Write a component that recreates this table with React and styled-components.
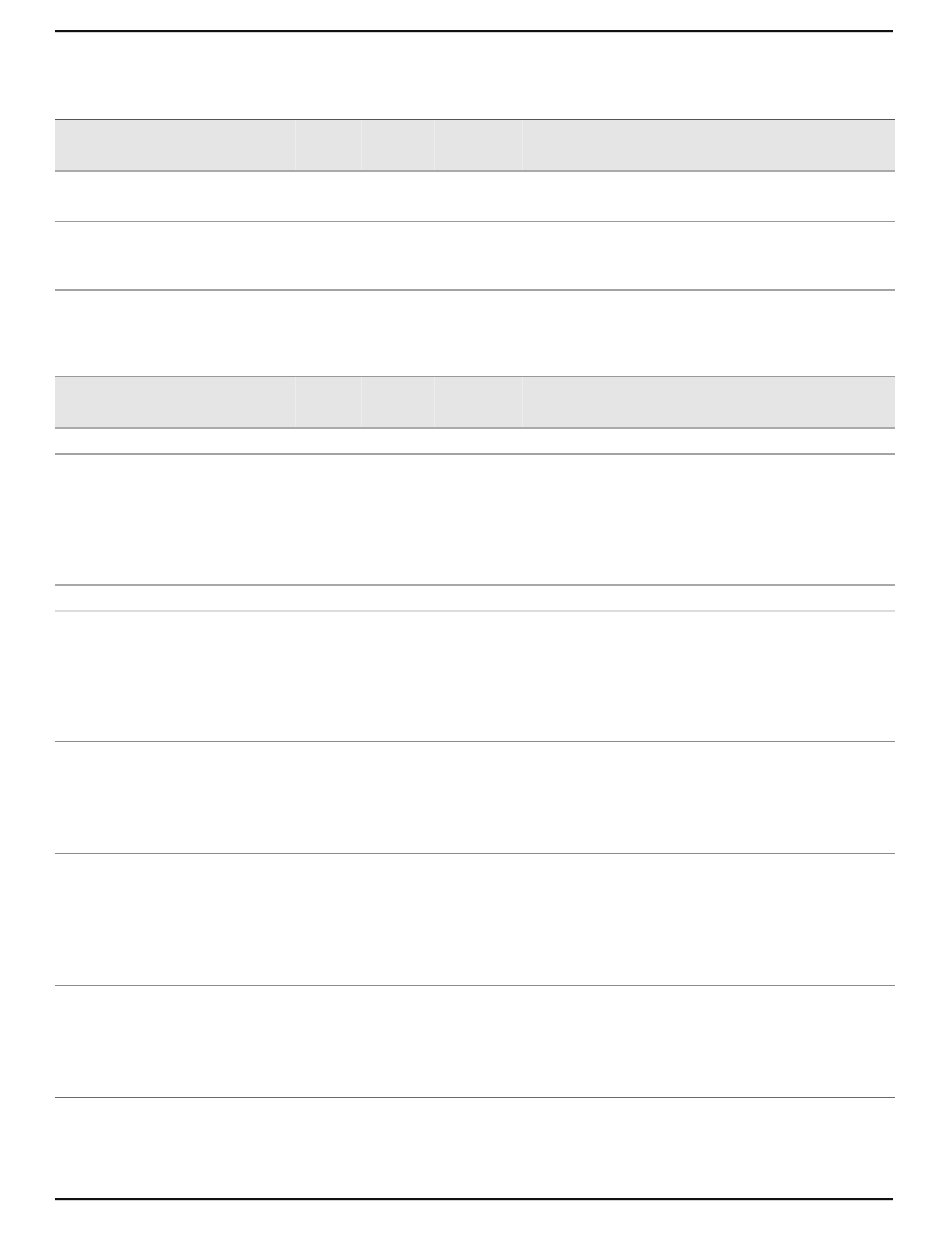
import React from 'react';
import styled, { createGlobalStyle } from 'styled-components';

const GlobalStyle = createGlobalStyle`
  html, body {
    margin: 0;
    padding: 0;
    background: #fff;
    font-family: "Liberation Sans", Arial, sans-serif;
  }
`;

const Page = styled.div`
  width: 950px;
  height: 1260px;
  padding-left: 55px;
  box-sizing: border-box;
  overflow: hidden;
`;

const Rule = styled.div`
  width: 838px;
  height: 2px;
  background: #111;
  border-bottom: 1px solid #d4d4d4;
  margin-top: ${(p) => p.$top}px;
`;

const Table = styled.div`
  width: 840px;
  margin-top: ${(p) => p.$top}px;
  display: flex;
  flex-direction: column;
`;

const HeaderRow = styled.div`
  display: grid;
  grid-template-columns: 240px 66px 73px 88px 1fr;
  height: 50px;
  background: #e5e5e5;
  border-top: 1px solid ${(p) => p.$topColor};
  border-bottom: 2px solid #aaa;
`;

const HeaderCell = styled.div`
  border-left: ${(p) => (p.$first ? 'none' : '1px solid #ededed')};
  font-size: 12px;
  font-weight: bold;
  color: #222;
`;

const Row = styled.div`
  height: ${(p) => p.$h}px;
  border-bottom: ${(p) => (p.$line ? `${p.$w}px solid ${p.$line}` : 'none')};
`;

const cols = [0, 1, 2, 3, 4];

const Header = ({ topColor }) => (
  <HeaderRow $topColor={topColor}>
    {cols.map((c) => (
      <HeaderCell key={c} $first={c === 0} />
    ))}
  </HeaderRow>
);

const firstRows = [
  { h: 49, line: '#999', w: 1 },
  { h: 67, line: '#a3a3a3', w: 2 },
];

const secondRows = [
  { h: 24, line: '#a3a3a3', w: 2 },
  { h: 129, line: '#a8a8a8', w: 2 },
  { h: 24, line: '#dcdcdc', w: 2 },
  { h: 129, line: '#8c8c8c', w: 1 },
  { h: 111, line: '#8c8c8c', w: 1 },
  { h: 131, line: '#8c8c8c', w: 1 },
  { h: 111, line: '#6a6a6a', w: 1 },
  { h: 100 },
];

const App = () => {
  return (
    <Page>
      <GlobalStyle />
      <Rule $top={30} />

      {/* first table */}
      <Table $top={86}>
        <Header topColor="#555" />
        {firstRows.map((r, i) => (
          <Row key={i} $h={r.h} $line={r.line} $w={r.w} />
        ))}
      </Table>

      {/* second table */}
      <Table $top={85}>
        <Header topColor="#999" />
        {secondRows.map((r, i) => (
          <Row key={i} $h={r.h} $line={r.line} $w={r.w} />
        ))}
      </Table>

      <Rule $top={0} />
    </Page>
  );
};

export default App;
